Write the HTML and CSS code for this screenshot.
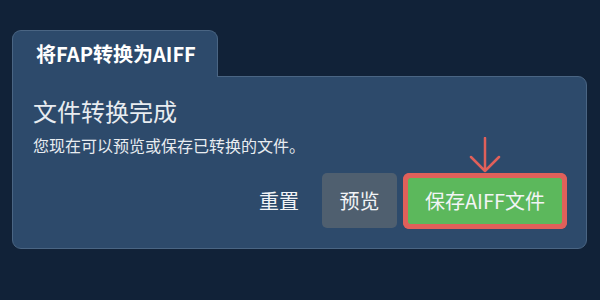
FILE: index.html
```html
<!DOCTYPE html>
<html>
<head>
  <title>将FAP转换为AIFF</title>
  <link rel="stylesheet" href="styles.css">
</head>
<body>
  <div class="converter">
    <div class="tab">将FAP转换为AIFF</div>

    <div class="panel">
      <h2 class="title">文件转换完成</h2>
      <p class="subtitle">您现在可以预览或保存已转换的文件。</p>

      <div class="actions">
        <button class="btn btn-text">重置</button>
        <button class="btn btn-gray">预览</button>
        <div class="save-wrap">
          <!-- pointer arrow above the save button -->
          <svg class="pointer" width="32" height="36" viewBox="0 0 32 36">
            <path d="M16 1 V34 M2 20 L16 34 L30 20" fill="none" stroke="#e0605a" stroke-width="2.5" stroke-linecap="round" stroke-linejoin="round"/>
          </svg>
          <button class="btn btn-green">保存AIFF文件</button>
        </div>
      </div>
    </div>
  </div>
</body>
</html>
```

FILE: styles.css
```css
body {
  margin: 0;
  background: #112238;
  font-family: "Noto Sans CJK SC", "Noto Sans", sans-serif;
  color: #e8ecf0;
}

.converter {
  padding: 30px 13px 0 12px;
}

.tab {
  position: relative;
  z-index: 1;
  display: inline-block;
  box-sizing: border-box;
  height: 47px;
  margin-bottom: -1px;
  padding: 0 21px 0 23px;
  background: #2d4a6b;
  border: 1px solid #4a6583;
  border-bottom: none;
  border-radius: 9px 9px 0 0;
  color: #ffffff;
  font-size: 20px;
  font-weight: bold;
  line-height: 45px;
}

.panel {
  background: #2d4a6b;
  border: 1px solid #4a6583;
  border-radius: 0 9px 9px 9px;
  padding: 18px 19px 20px 20px;
}

.title {
  margin: 0;
  font-size: 24px;
  font-weight: normal;
  line-height: 32px;
}

.subtitle {
  margin: 6px 0 0;
  font-size: 16px;
  line-height: 24px;
}

.actions {
  display: flex;
  justify-content: flex-end;
  align-items: center;
  gap: 11px;
  margin-top: 16px;
}

.btn {
  font-family: inherit;
  font-size: 20px;
  border: none;
  border-radius: 5px;
  color: #f2f4f6;
  cursor: pointer;
}

.btn-text {
  background: none;
  padding: 0 12px;
  height: 55px;
}

.btn-gray {
  background: #4f5f6f;
  width: 75px;
  height: 55px;
  padding: 0;
}

.save-wrap {
  position: relative;
  margin-right: 5px;
}

.btn-green {
  display: block;
  background: #5cb85c;
  width: 154px;
  height: 46px;
  padding: 0;
  border-radius: 2px;
  outline: 5px solid #e0605a;
  outline-offset: 0;
  box-shadow: 0 0 0 5px #e0605a;
}

.pointer {
  position: absolute;
  left: 61px;
  bottom: 100%;
  margin-bottom: 5px;
}
```
